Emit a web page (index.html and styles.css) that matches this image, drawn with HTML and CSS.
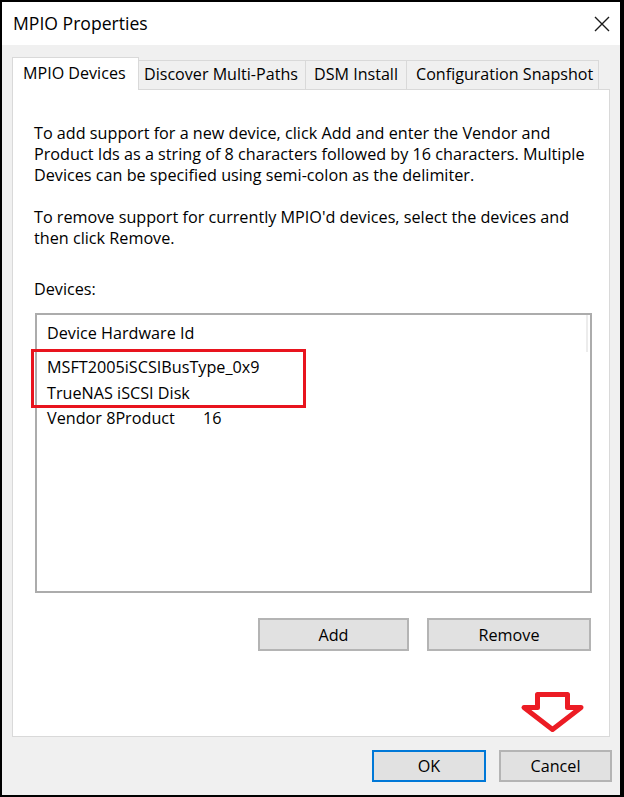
FILE: index.html
```html
<!DOCTYPE html>
<html>
<head>
<meta charset="utf-8">
<title>MPIO Properties</title>
<link rel="stylesheet" href="styles.css">
</head>
<body>
<div class="window">
  <div class="titlebar">
    <span class="title">MPIO Properties</span>
    <svg class="close" width="16" height="16" viewBox="0 0 16 16"><path d="M1 1 L15 15 M15 1 L1 15" stroke="#1a1a1a" stroke-width="1.4" fill="none"/></svg>
  </div>
  <div class="client">
    <div class="tabs">
      <div class="tab active">MPIO Devices</div>
      <div class="tab t2">Discover Multi-Paths</div>
      <div class="tab t3">DSM Install</div>
      <div class="tab t4">Configuration Snapshot</div>
    </div>
    <div class="panel">
      <p class="para">To add support for a new device, click Add and enter the Vendor and<br>Product Ids as a string of 8 characters followed by 16 characters. Multiple<br>Devices can be specified using semi-colon as the delimiter.</p>
      <p class="para">To remove support for currently MPIO'd devices, select the devices and<br>then click Remove.</p>
      <p class="label">Devices:</p>
      <div class="listbox">
        <div class="lb-header">Device Hardware Id</div>
        <div class="lb-rows">
          <div class="row">MSFT2005iSCSIBusType_0x9</div>
          <div class="row">TrueNAS iSCSI Disk</div>
          <div class="row"><span class="vid">Vendor 8Product</span>16</div>
        </div>
        <div class="highlight"></div>
      </div>
      <div class="btnrow">
        <div class="btn add">Add</div>
        <div class="btn remove">Remove</div>
      </div>
      <svg class="arrow" width="67" height="41" viewBox="0 0 67 41"><polygon points="18.5,2.5 48.5,2.5 48.5,15.5 62,15.5 33.5,37.5 5,15.5 18.5,15.5" fill="#fff" stroke="#ec1c24" stroke-width="5" stroke-linejoin="round"/></svg>
    </div>
    <div class="footer">
      <div class="btn ok">OK</div>
      <div class="btn cancel">Cancel</div>
    </div>
  </div>
</div>
</body>
</html>
```
FILE: styles.css
```css
* { box-sizing: border-box; }
html, body { margin: 0; padding: 0; background: #000; }
body { font-family: "Open Sans", "Noto Sans", sans-serif; color: #000; }

.window {
  width: 624px;
  height: 797px;
  border-style: solid;
  border-color: #000;
  border-width: 2px 4px 2px 2px;
  background: #f0f0f0;
  display: flex;
  flex-direction: column;
}

.titlebar {
  height: 43px;
  background: #fff;
  display: flex;
  align-items: center;
  justify-content: space-between;
  padding: 0 10px 2px 11px;
}
.title { font-size: 17.6px; color: #000; }
.close { display: block; margin-top: 2px; }

.client {
  flex: 1;
  padding: 12px 0 0 10px;
  display: flex;
  flex-direction: column;
}

.tabs {
  display: flex;
  height: 33px;
  margin-bottom: -1px;
  position: relative;
  z-index: 1;
}
.tab {
  font-size: 16.1px;
  height: 29px;
  margin-top: 3px;
  line-height: 27px;
  border-top: 1px solid #d9d9d9;
  border-right: 1px solid #d9d9d9;
  background: #f0f0f0;
  white-space: nowrap;
}
.tab.active {
  width: 127px;
  height: 33px;
  margin-top: 0;
  line-height: 30px;
  border-left: 1px solid #d9d9d9;
  background: #fff;
  padding-left: 10px;
}
.t2 { width: 167px; padding-left: 5px; }
.t3 { width: 101px; padding-left: 8px; }
.t4 { width: 192px; padding-left: 9px; }

.panel {
  position: relative;
  width: 598px;
  height: 648px;
  border: 1px solid #d9d9d9;
  background: #fff;
  padding: 33px 17px 0 21px;
  display: flex;
  flex-direction: column;
}

.para {
  margin: 0 0 21px;
  font-size: 16.2px;
  line-height: 21px;
  white-space: nowrap;
}
.label {
  margin: 9px 0 13px;
  font-size: 16.2px;
  line-height: 21px;
}

.listbox {
  position: relative;
  margin-left: 1px;
  height: 280px;
  border: 2px solid #acacac;
  background: #fff;
  font-size: 16.2px;
}
.lb-header {
  height: 37px;
  margin-right: 2px;
  border-right: 2px solid #ececec;
  padding: 6px 0 0 10px;
  line-height: 24px;
}
.lb-rows { padding: 3px 0 0 10px; }
.row { line-height: 25.5px; white-space: nowrap; }
.vid { display: inline-block; width: 156px; }

.highlight {
  position: absolute;
  left: -6px;
  top: 34px;
  width: 275px;
  height: 59px;
  border: 3px solid #e8141e;
}

.btnrow {
  display: flex;
  justify-content: flex-end;
  gap: 18px;
  margin-top: 25px;
  padding-right: 1px;
}

.btn {
  height: 33px;
  background: #e1e1e1;
  border: 2px solid #b4b4b4;
  font-size: 16.2px;
  display: flex;
  align-items: center;
  justify-content: center;
}
.add { width: 151px; }
.remove { width: 164px; }

.arrow {
  position: absolute;
  left: 506px;
  top: 602px;
}

.footer {
  display: flex;
  justify-content: flex-end;
  gap: 13px;
  padding: 13px 8px 0 0;
}
.ok { width: 114px; height: 32px; border-color: #0078d7; }
.cancel { width: 113px; height: 32px; }
```
